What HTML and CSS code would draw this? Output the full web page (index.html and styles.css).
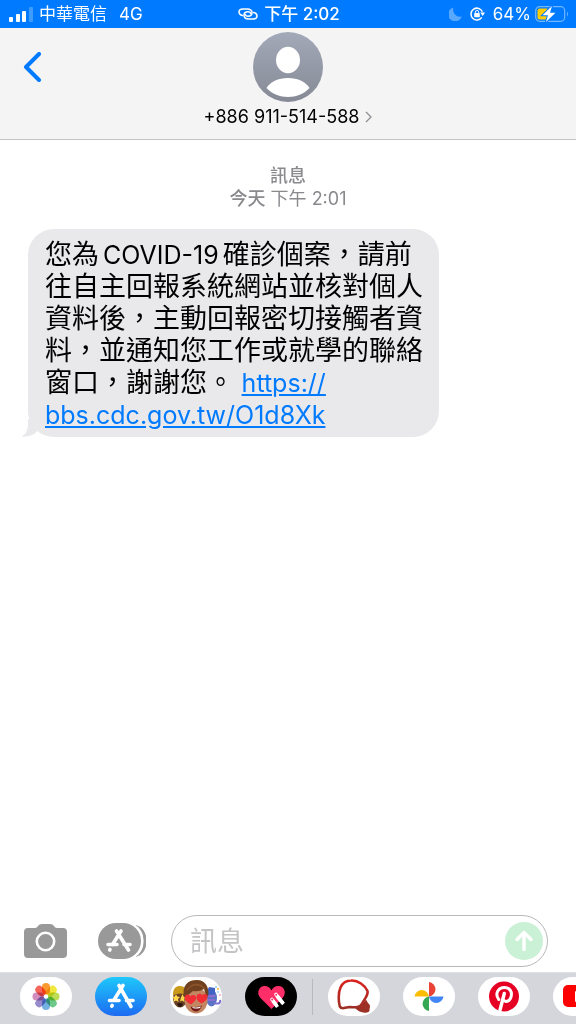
FILE: index.html
```html
<!DOCTYPE html>
<html lang="zh-Hant">
<head>
    <meta charset="UTF-8">
    <meta name="viewport" content="width=device-width, initial-scale=1.0">
    <title>訊息</title>
    <link rel="stylesheet" href="styles.css">
</head>
<body>

    <!-- Status Bar -->
    <div class="status-bar">
        <div class="status-left">
            <svg class="signal" width="24" height="16" viewBox="0 0 24 16" fill="#fff">
                <rect x="0" y="11" width="4" height="5" rx="1"/>
                <rect x="7" y="8" width="4" height="8" rx="1"/>
                <rect x="13" y="5" width="4" height="11" rx="1"/>
                <rect x="20" y="1" width="4" height="15" rx="1" opacity=".25"/>
            </svg>
            <span>中華電信</span>
            <span class="network">4G</span>
        </div>
        <div class="status-center">
            <svg width="20" height="14" viewBox="0 0 20 14" fill="none" stroke="#fff" stroke-width="1.5" stroke-linecap="round">
                <path d="M4.500 8.500C2 8 1 6.500 1 5C1 3 2.800 2 5 2H9C12 2 14 3.500 14 5.800C14 8 12.500 9.200 10 9.200C8.500 9.200 7.500 8.500 7.200 7.500"/>
                <path d="M15.500 5.500C18 6 19 7.500 19 9C19 11 17.200 12 15 12H11C8 12 6 10.500 6 8.200C6 6 7.500 4.800 10 4.800C11.500 4.800 12.500 5.500 12.800 6.500"/>
            </svg>
            <span>下午 2:02</span>
        </div>
        <div class="status-right">
            <svg width="13" height="14" viewBox="0 0 13 14">
                <path d="M4.500 0.500A7 7 0 1 0 12.800 9.500A7 7 0 0 1 4.500 0.500Z" fill="#fff" opacity=".35"/>
            </svg>
            <svg width="15" height="14" viewBox="0 0 15 14" fill="none" stroke="#fff" stroke-width="1.500">
                <path d="M12.400 4.800A5.900 5.900 0 1 0 11.800 10.400"/>
                <path d="M10.200 5.600H15L12.700 9Z" fill="#fff" stroke="none"/>
                <rect x="4.200" y="6" width="5.600" height="4.200" rx=".8" fill="#fff" stroke="none"/>
                <path d="M5.300 6V5.200A1.700 1.700 0 0 1 8.700 5.200V6" stroke-width="1"/>
            </svg>
            <span>64%</span>
            <svg class="battery" width="34" height="18" viewBox="0 0 34 18">
                <rect x=".7" y="1.700" width="29" height="14.600" rx="4" fill="none" stroke="#fff" stroke-width="1.200" opacity=".45"/>
                <path d="M32 6.500Q34 9 32 11.500Z" fill="#fff" opacity=".45"/>
                <path d="M4.500 3.500H12.500V14.500H4.500Q2.500 14.500 2.500 12.500V5.500Q2.500 3.500 4.500 3.500Z" fill="#ffcc02"/>
                <path d="M17 1L7.500 10.300H13L11 17L20.500 7.700H15Z" fill="#fff" stroke="#007aff" stroke-width="2" paint-order="stroke"/>
            </svg>
        </div>
    </div>

    <!-- Contact Header -->
    <header class="header">
        <button class="back" type="button" aria-label="返回">
            <svg width="20" height="30" viewBox="0 0 20 30" fill="none" stroke="#007aff" stroke-width="4" stroke-linecap="round" stroke-linejoin="round">
                <path d="M17 2L4 15L17 28"/>
            </svg>
        </button>
        <button class="contact" type="button">
            <svg width="70" height="70" viewBox="0 0 70 70">
                <defs>
                    <linearGradient id="avatar" x1="0" y1="0" x2="0" y2="1">
                        <stop offset="0" stop-color="#a3a9b8"/>
                        <stop offset="1" stop-color="#868a96"/>
                    </linearGradient>
                </defs>
                <circle cx="35" cy="35" r="35" fill="url(#avatar)"/>
                <ellipse cx="35" cy="28" rx="12" ry="13.200" fill="#fff"/>
                <path d="M13.500 56C17 50 25 46 35 46S53 50 56.500 56C51 62 43 65 35 65S19 62 13.500 56Z" fill="#fff"/>
            </svg>
            <span class="contact-name">
                +886 911-514-588
                <svg width="7" height="12" viewBox="0 0 7 12" fill="none" stroke="#8e8e93" stroke-width="1.300">
                    <path d="M1 1L6 6L1 11"/>
                </svg>
            </span>
        </button>
    </header>

    <!-- Messages -->
    <main class="messages">
        <div class="timestamp">
            <p><strong>訊息</strong></p>
            <p><strong>今天</strong> 下午 2:01</p>
        </div>
        <div class="bubble">
            <svg class="tail" width="22" height="18" viewBox="0 0 22 18">
                <path d="M7 0V4C7 11 5 16 0 17.500C7 18.500 13 16 16 12.500L22 0Z" fill="#e9e9eb"/>
            </svg>
            <p>您為<span class="latin case">COVID-19</span>確診個案，請前往自主回報系統網站並核對個人資料後，主動回報密切接觸者資料，並通知您工作或就學的聯絡窗口，謝謝您。 <a class="latin" href="#">https://<wbr>bbs.cdc.gov.tw/O1d8Xk</a></p>
        </div>
    </main>

    <!-- Composer -->
    <form class="composer">
        <button class="camera" type="button" aria-label="相機">
            <svg width="43" height="34" viewBox="0 0 43 34">
                <path d="M4 4H11Q13 4 14 2Q15 0 18 0H26Q29 0 30 2Q31 4 33 4H39Q43 4 43 8V30Q43 34 39 34H4Q0 34 0 30V8Q0 4 4 4Z" fill="#999"/>
                <circle cx="21.500" cy="17.500" r="8.700" fill="none" stroke="#fff" stroke-width="2.600"/>
            </svg>
        </button>
        <button class="apps" type="button" aria-label="App">
            <svg width="48" height="36" viewBox="0 0 48 36">
                <path d="M38 2C52 8 52 28 38 34Z" fill="#999"/>
                <rect x="-1" y="-1" width="47" height="38" rx="19" fill="#fff"/>
                <path d="M40 2.500C51.500 8 51.500 28 40 33.500C47.500 26 47.500 10 40 2.500Z" fill="#999"/>
                <rect width="43" height="36" rx="18" fill="#999"/>
                <g stroke="#fff" stroke-width="3.600" stroke-linecap="round">
                    <path d="M23 8L14.500 21.500M18.500 8L30.500 27M10 21.500H19M26 21.500H32M12 26.500L11.700 27"/>
                </g>
            </svg>
        </button>
        <div class="field">
            <input type="text" placeholder="訊息" aria-label="訊息">
            <button class="send" type="submit" aria-label="傳送">
                <svg width="38" height="38" viewBox="0 0 38 38">
                    <circle cx="19" cy="19" r="19" fill="#caf0d5"/>
                    <path d="M19 27.500V11M12 17.500L19 10.500L26 17.500" fill="none" stroke="#fff" stroke-width="3.400" stroke-linecap="round" stroke-linejoin="round"/>
                </svg>
            </button>
        </div>
    </form>

    <!-- App Strip -->
    <nav class="app-strip">
        <button class="app" type="button" aria-label="照片">
            <svg width="52" height="39" viewBox="0 0 52 39">
                <g class="petals" transform="translate(26 19.500)">
                    <rect x="-4" y="-13.500" width="8" height="11.500" rx="4" fill="#fb9a2e"/>
                    <rect x="-4" y="-13.500" width="8" height="11.500" rx="4" fill="#f0e63c" transform="rotate(45)"/>
                    <rect x="-4" y="-13.500" width="8" height="11.500" rx="4" fill="#bfdc55" transform="rotate(90)"/>
                    <rect x="-4" y="-13.500" width="8" height="11.500" rx="4" fill="#6cc98a" transform="rotate(135)"/>
                    <rect x="-4" y="-13.500" width="8" height="11.500" rx="4" fill="#74b0e2" transform="rotate(180)"/>
                    <rect x="-4" y="-13.500" width="8" height="11.500" rx="4" fill="#968ccc" transform="rotate(225)"/>
                    <rect x="-4" y="-13.500" width="8" height="11.500" rx="4" fill="#d18dbd" transform="rotate(270)"/>
                    <rect x="-4" y="-13.500" width="8" height="11.500" rx="4" fill="#f4655a" transform="rotate(315)"/>
                </g>
            </svg>
        </button>
        <button class="app store" type="button" aria-label="App Store">
            <svg width="52" height="39" viewBox="0 0 52 39" stroke="#fff" stroke-width="3.600" stroke-linecap="round">
                <path d="M28 8.500L19 23M24 8.500L36 29.500M14.500 23.500H24M31.500 23.500H38M17.200 28.500L16.800 29.200"/>
            </svg>
        </button>
        <button class="app" type="button" aria-label="Memoji">
            <svg width="52" height="39" viewBox="0 0 52 39">
                <ellipse cx="10" cy="21" rx="7" ry="9.500" fill="#6b4226"/>
                <path d="M3 18C3 11 6 9 10 9S17 12 17 18Q10 15 3 18Z" fill="#c99a1c"/>
                <path d="M6 17L7.200 19.500L10 20L8 22L8.500 25L6 23.500L3.500 25L4 22L2 20L4.800 19.500ZM12.500 17L13.500 19.500L16 20L14 22L14.500 25L12 23.500L10 24.500L10.500 22Z" fill="#ffd94a"/>
                <path d="M7 26.500Q10 25.500 13 26.500Q12 30 10 30T7 26.500Z" fill="#2d1811"/>
                <ellipse cx="41.500" cy="21" rx="5.500" ry="8.500" fill="#5b73c5"/>
                <path d="M37 14L39 10L45 11L45 17L38 18Z" fill="#3f63c4"/>
                <path d="M38 19H45M37 23H45" stroke="#8f6bd0" stroke-width="2"/>
                <path d="M44 26Q51 28 50 23" fill="none" stroke="#7e70d2" stroke-width="2"/>
                <circle cx="48" cy="12" r="1" fill="#f4b22c"/>
                <circle cx="46" cy="10" r=".8" fill="#39a6ef"/>
                <circle cx="50" cy="18" r=".8" fill="#ef5b9c"/>
                <circle cx="48" cy="15" r=".7" fill="#39a6ef"/>
                <ellipse cx="26" cy="23.500" rx="11.500" ry="13" fill="#c48660"/>
                <path d="M14 20C12 9 17 3 27 3C35 3 40 10 38 20L35.500 17L34 12Q29 15 23 14L18 18L16 21Z" fill="#70401f"/>
                <path d="M17 13Q23 5 32 9M21 9Q28 5 35 12" fill="none" stroke="#8c552c" stroke-width="1.500"/>
                <path d="M21 27.500C15 24 13.500 21 15.500 18.500C17.500 16.500 20 17.500 20.500 19.500C22 17.500 25 17.500 26 20C26.500 23 24 25 21 27.500Z" fill="#f22e35"/>
                <path d="M31.500 26.500C26 23.500 25.500 20 27.500 17.500C29 16 31.500 16.500 32 18.500C33.500 16.500 36.500 16.500 37.500 19C38 22 35 24.500 31.500 26.500Z" fill="#f22e35"/>
                <path d="M20.500 29.500Q26 31 32 28.500Q30 34.500 26 34.500T20.500 29.500Z" fill="#6f1c1a"/>
                <path d="M22 30Q26 31 31 29.500L30 31Q26 32 23 31Z" fill="#fff"/>
            </svg>
        </button>
        <button class="app digital-touch" type="button" aria-label="Digital Touch">
            <svg width="52" height="39" viewBox="0 0 52 39">
                <path d="M26.500 32L15 20.500C11 15.500 14.500 9 19.500 9C23 9 25.500 11 26.500 13.500C27.500 11 30 9 33.500 9C39 9 42 15.500 38 20.500Z" fill="#ff2d68"/>
                <g stroke="#fff" stroke-width="3.600">
                    <path d="M27 22.500L31 27.500M31 17.500L37 25" stroke-linecap="round"/>
                    <path d="M28 24L32.500 30M32 19L38.500 27"/>
                </g>
                <g fill="#ff2d68">
                    <circle cx="27.200" cy="22.500" r="1"/>
                    <circle cx="31.200" cy="17.800" r="1"/>
                </g>
            </svg>
        </button>
        <span class="divider"></span>
        <button class="app" type="button" aria-label="貼圖">
            <svg width="52" height="39" viewBox="0 0 52 39">
                <defs>
                    <linearGradient id="loop" x1="0" y1="0" x2="0" y2="1">
                        <stop offset="0" stop-color="#d8211f"/>
                        <stop offset="1" stop-color="#9c3025"/>
                    </linearGradient>
                </defs>
                <path d="M27 31Q34 29 38 22.500L40 26Q43 28 41.500 32Q42 35 39 35.500Q32 36.500 27 31Z" fill="#9c3025"/>
                <path d="M23 3.500C30 3 37 8.500 39.500 14C40.500 18 37 21 34.500 26C32 31 27 30.500 22 30C17 30 14 33.500 11.800 29.500C10.500 25 10 16 12.500 10.500C14.500 6 18 3.500 23 3.500Z" fill="#fff" stroke="url(#loop)" stroke-width="2.600"/>
            </svg>
        </button>
        <button class="app" type="button" aria-label="Google 相簿">
            <svg width="52" height="39" viewBox="0 0 52 39">
                <path d="M26 5A7.300 7.300 0 0 1 26 19.500Z" fill="#ea4335"/>
                <path d="M11.500 19.500A7.300 7.300 0 0 1 26 19.500Z" fill="#fbbc04"/>
                <path d="M26 19.500V34A7.300 7.300 0 0 1 26 19.500Z" fill="#34a853"/>
                <path d="M26 19.500H40.500A7.300 7.300 0 0 1 26 19.500Z" fill="#4285f4"/>
            </svg>
        </button>
        <button class="app" type="button" aria-label="Pinterest">
            <svg width="52" height="39" viewBox="0 0 52 39" fill="none" stroke="#fff" stroke-linecap="round">
                <circle cx="26" cy="19.500" r="15" fill="#e60023" stroke="none"/>
                <path d="M26.300 16.500L22 33" stroke-width="3.400"/>
                <path d="M20.800 22.500C16.500 17 20 10.500 26.500 10.500C32 10.500 34.500 15 33 20C31.500 25 27 25.500 25 22.500" stroke-width="3"/>
            </svg>
        </button>
        <button class="app" type="button" aria-label="YouTube">
            <svg width="52" height="39" viewBox="0 0 52 39">
                <rect x="10" y="8" width="32" height="22" rx="5" fill="#f00"/>
                <path d="M22 14V25L31 19.500Z" fill="#fff"/>
            </svg>
        </button>
    </nav>

</body>
</html>
```
FILE: styles.css
```css
/* General Styles */
* {
    box-sizing: border-box;
}

body {
    display: flex;
    flex-direction: column;
    min-height: 100vh;
    margin: 0;
    background: #fff;
    color: #000;
    font-family: Inter, "Noto Sans CJK TC", sans-serif;
    overflow-x: hidden;
}

p {
    margin: 0;
}

button {
    display: block;
    flex: none;
    margin: 0;
    padding: 0;
    border: none;
    background: none;
    color: inherit;
    font: inherit;
    cursor: pointer;
}

svg {
    display: block;
    flex: none;
}

/* Status Bar */
.status-bar {
    display: grid;
    grid-template-columns: 1fr auto 1fr;
    align-items: center;
    height: 28px;
    padding: 0 7px 0 9px;
    background: #007aff;
    color: #fff;
    font-size: 17px;
    line-height: 28px;
}

.status-left,
.status-center,
.status-right {
    display: flex;
    align-items: center;
    gap: 6px;
}

.status-center {
    font-weight: 500;
}

.status-right {
    justify-content: flex-end;
    gap: 8px;
}

.network {
    margin-left: 6px;
}

.battery {
    margin-left: -4px;
}

/* Contact Header */
.header {
    display: grid;
    grid-template-columns: 1fr auto 1fr;
    align-items: start;
    height: 112px;
    padding: 4px 22px 0;
    background: #f4f4f4;
    border-bottom: 1px solid #c4c4c6;
}

.back {
    margin-top: 20px;
}

.contact {
    display: flex;
    flex-direction: column;
    align-items: center;
}

.contact-name {
    display: flex;
    align-items: center;
    gap: 6px;
    font-size: 18px;
    line-height: 30px;
}

/* Messages */
.messages {
    flex: 1;
    padding: 24px 0 24px 28px;
}

.timestamp {
    margin: 0 28px 19px 0;
    color: #8a8a8e;
    font-size: 18px;
    line-height: 23px;
    text-align: center;
}

.timestamp strong {
    font-weight: 500;
}

.bubble {
    position: relative;
    width: fit-content;
    max-width: 75%;
    padding: 10px 15px 6px 17px;
    border-radius: 26px;
    background: #e9e9eb;
    font-size: 27px;
    line-height: 32px;
}

.latin {
    font-size: 25px;
}

.case {
    margin: 0 4px;
}

.bubble a {
    color: #007aff;
}

.tail {
    position: absolute;
    left: -7px;
    bottom: 0;
}

.bubble p {
    position: relative;
}

/* Composer */
.composer {
    display: flex;
    align-items: center;
    padding: 0 28px 5px 24px;
}

.apps {
    margin: 0 25px 0 31px;
}

.field {
    display: flex;
    flex: 1;
    align-items: center;
    min-width: 0;
    height: 52px;
    padding: 0 4px 0 18px;
    border: 1px solid #b9b9bc;
    border-radius: 26px;
}

.field input {
    flex: 1;
    min-width: 0;
    padding: 0;
    border: none;
    outline: none;
    background: none;
    font-family: inherit;
    font-size: 27px;
}

.field input::placeholder {
    color: #c4c4c6;
}

/* App Strip */
.app-strip {
    display: flex;
    align-items: center;
    gap: 23px;
    height: 52px;
    padding: 0 0 4px 20px;
    background: #d5d6db;
    border-top: 1px solid #e2e2e6;
    overflow: hidden;
}

.app {
    width: 52px;
    height: 39px;
    border-radius: 20px;
    background: #fff;
    overflow: hidden;
}

.store {
    background: linear-gradient(#1ec8fb, #1d6bf2);
}

.digital-touch {
    background: #000;
}

.petals rect {
    mix-blend-mode: multiply;
}

.divider {
    flex: none;
    width: 1px;
    height: 36px;
    margin: 0 -8px;
    background: #b7b8bd;
}
```
